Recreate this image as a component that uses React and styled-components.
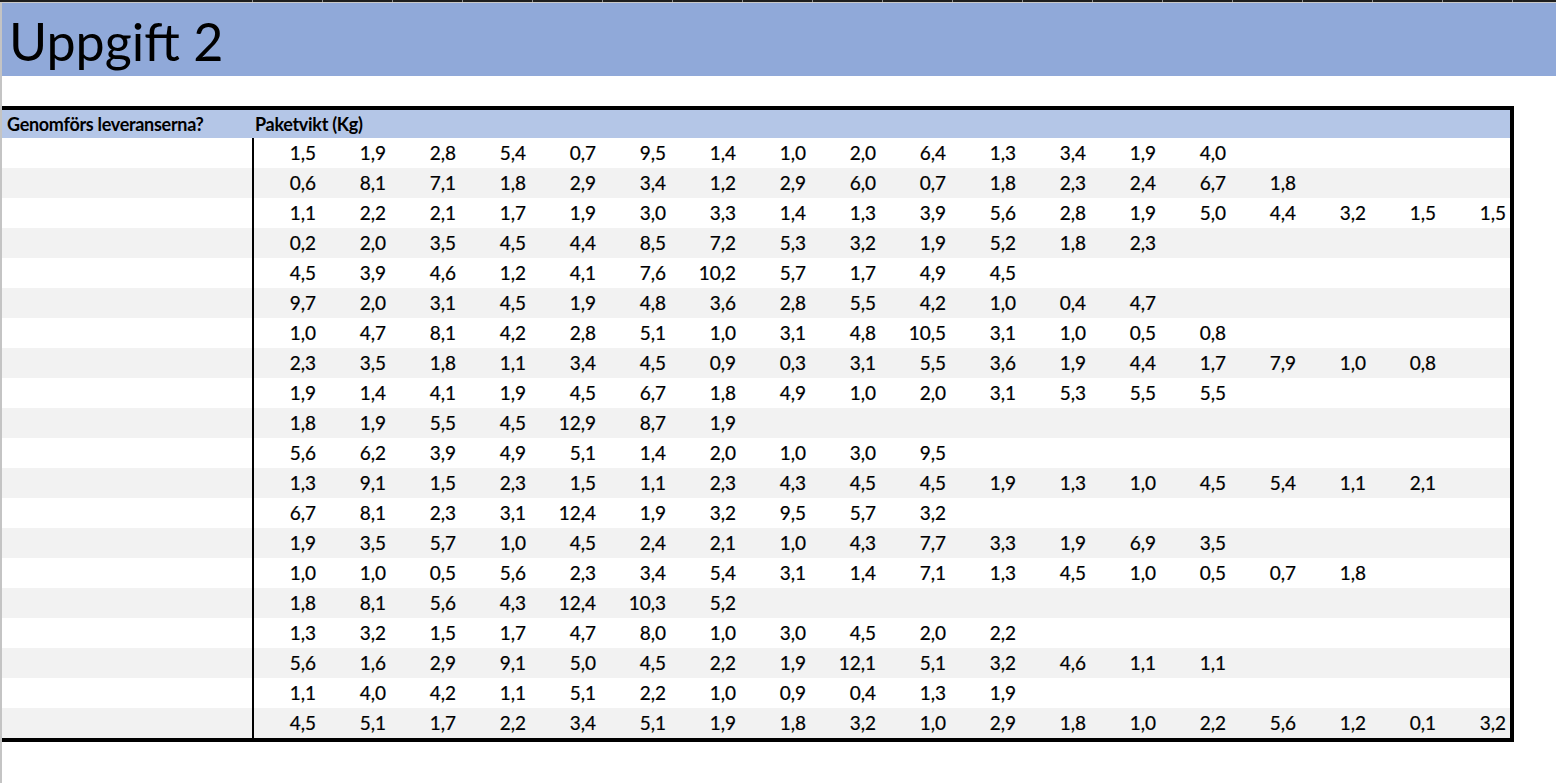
import React from "react";
import styled, { createGlobalStyle } from "styled-components";

const GlobalStyle = createGlobalStyle`
  html, body {
    margin: 0;
    padding: 0;
    background: #ffffff;
  }
  body {
    font-family: Lato, "Open Sans", "Liberation Sans", sans-serif;
    color: #000;
  }
`;

const DATA = [
  "1,5 1,9 2,8 5,4 0,7 9,5 1,4 1,0 2,0 6,4 1,3 3,4 1,9 4,0",
  "0,6 8,1 7,1 1,8 2,9 3,4 1,2 2,9 6,0 0,7 1,8 2,3 2,4 6,7 1,8",
  "1,1 2,2 2,1 1,7 1,9 3,0 3,3 1,4 1,3 3,9 5,6 2,8 1,9 5,0 4,4 3,2 1,5 1,5",
  "0,2 2,0 3,5 4,5 4,4 8,5 7,2 5,3 3,2 1,9 5,2 1,8 2,3",
  "4,5 3,9 4,6 1,2 4,1 7,6 10,2 5,7 1,7 4,9 4,5",
  "9,7 2,0 3,1 4,5 1,9 4,8 3,6 2,8 5,5 4,2 1,0 0,4 4,7",
  "1,0 4,7 8,1 4,2 2,8 5,1 1,0 3,1 4,8 10,5 3,1 1,0 0,5 0,8",
  "2,3 3,5 1,8 1,1 3,4 4,5 0,9 0,3 3,1 5,5 3,6 1,9 4,4 1,7 7,9 1,0 0,8",
  "1,9 1,4 4,1 1,9 4,5 6,7 1,8 4,9 1,0 2,0 3,1 5,3 5,5 5,5",
  "1,8 1,9 5,5 4,5 12,9 8,7 1,9",
  "5,6 6,2 3,9 4,9 5,1 1,4 2,0 1,0 3,0 9,5",
  "1,3 9,1 1,5 2,3 1,5 1,1 2,3 4,3 4,5 4,5 1,9 1,3 1,0 4,5 5,4 1,1 2,1",
  "6,7 8,1 2,3 3,1 12,4 1,9 3,2 9,5 5,7 3,2",
  "1,9 3,5 5,7 1,0 4,5 2,4 2,1 1,0 4,3 7,7 3,3 1,9 6,9 3,5",
  "1,0 1,0 0,5 5,6 2,3 3,4 5,4 3,1 1,4 7,1 1,3 4,5 1,0 0,5 0,7 1,8",
  "1,8 8,1 5,6 4,3 12,4 10,3 5,2",
  "1,3 3,2 1,5 1,7 4,7 8,0 1,0 3,0 4,5 2,0 2,2",
  "5,6 1,6 2,9 9,1 5,0 4,5 2,2 1,9 12,1 5,1 3,2 4,6 1,1 1,1",
  "1,1 4,0 4,2 1,1 5,1 2,2 1,0 0,9 0,4 1,3 1,9",
  "4,5 5,1 1,7 2,2 3,4 5,1 1,9 1,8 3,2 1,0 2,9 1,8 1,0 2,2 5,6 1,2 0,1 3,2",
].map((r) => r.split(" "));

const COLS = 18;

const Page = styled.div`
  width: 1556px;
  height: 783px;
  display: flex;
  flex-direction: column;
  overflow: hidden;
`;

const TopStrip = styled.div`
  height: 2px;
  display: flex;
  background: #1e1e1e;
  border-bottom: 1px solid #c9c9c9;
  flex: none;
`;

const StripLead = styled.div`
  width: 252px;
  flex: none;
`;

const StripTicks = styled.div`
  flex: 1;
  background: repeating-linear-gradient(
    to right,
    #8c8c8c 0 1px,
    #1e1e1e 1px 70px
  );
`;

const Sheet = styled.div`
  flex: 1;
  display: flex;
  flex-direction: column;
  border-left: 2px solid #c4c4c4;
`;

const Banner = styled.div`
  height: 73px;
  flex: none;
  background: #90a9d9;
  display: flex;
  align-items: flex-start;
  padding: 8px 0 0 7px;
  box-sizing: border-box;
`;

const Title = styled.h1`
  margin: 0;
  font-family: Lato, "Liberation Sans", sans-serif;
  font-weight: 400;
  font-size: 52px;
  line-height: 60px;
  color: #000;
`;

const Gap = styled.div`
  height: 30px;
  flex: none;
`;

const Table = styled.div`
  width: 1508px;
  border-top: 4px solid #000;
  border-right: 4px solid #000;
  border-bottom: 4px solid #000;
  display: flex;
  flex-direction: column;
  overflow: hidden;
  flex: none;
`;

const HeaderRow = styled.div`
  height: 28px;
  background: #b4c6e7;
  display: flex;
  align-items: flex-start;
`;

const HeadCell = styled.div`
  width: ${(p) => p.$w}px;
  flex: none;
  box-sizing: border-box;
  padding-left: ${(p) => p.$pad}px;
  font-weight: 700;
  font-size: 18px;
  line-height: 28px;
  white-space: nowrap;
  letter-spacing: -0.3px;
`;

const Row = styled.div`
  height: 30px;
  display: grid;
  grid-template-columns: 252px repeat(${COLS}, 70px);
  background: ${(p) => (p.$alt ? "#f2f2f2" : "#ffffff")};
`;

const LabelCell = styled.div`
  border-right: 2px solid #000;
`;

const NumCell = styled.div`
  font-size: 19px;
  line-height: 30px;
  text-align: right;
  padding-right: 8px;
  white-space: nowrap;
  -webkit-text-stroke: 0.2px #000;
`;

export default function App() {
  return (
    <>
      <GlobalStyle />
      <Page>
        <TopStrip>
          <StripLead />
          <StripTicks />
        </TopStrip>
        <Sheet>
          <Banner>
            <Title>Uppgift 2</Title>
          </Banner>
          <Gap />
          <Table>
            <HeaderRow>
              <HeadCell $w={251} $pad={5}>Genomförs leveranserna?</HeadCell>
              <HeadCell $w={400} $pad={2}>Paketvikt (Kg)</HeadCell>
            </HeaderRow>
            {DATA.map((row, i) => (
              <Row key={i} $alt={i % 2 === 1}>
                <LabelCell />
                {Array.from({ length: COLS }, (_, c) => (
                  <NumCell key={c}>{row[c] || ""}</NumCell>
                ))}
              </Row>
            ))}
          </Table>
        </Sheet>
      </Page>
    </>
  );
}
